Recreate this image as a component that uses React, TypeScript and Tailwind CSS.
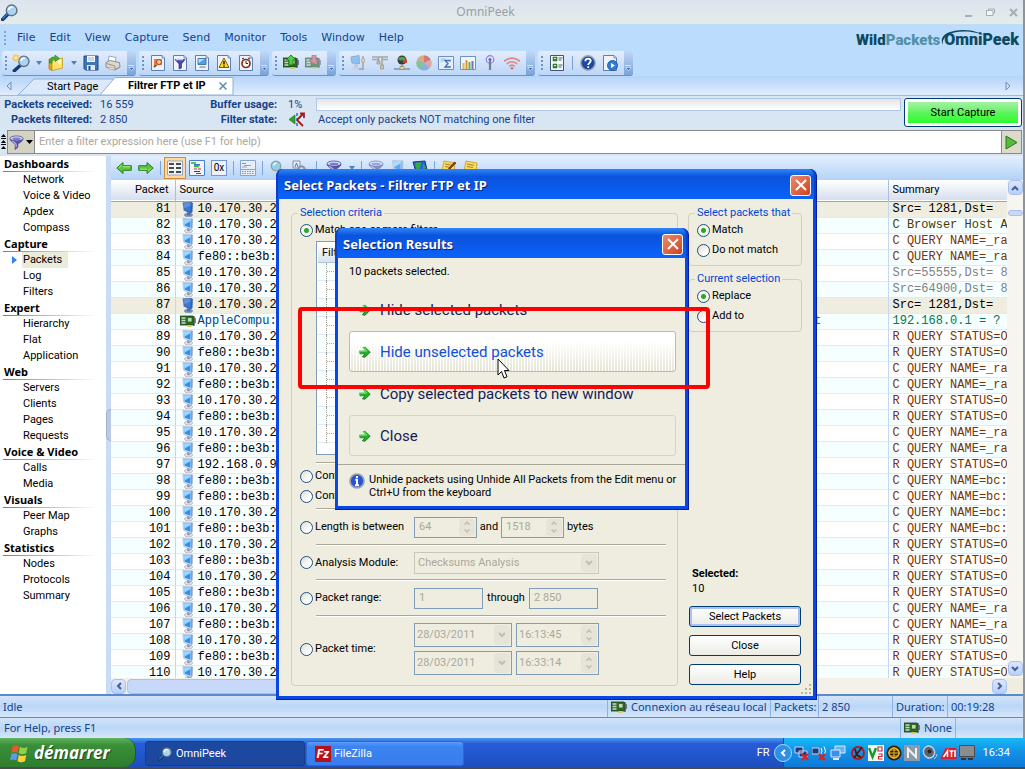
import type { ReactNode } from 'react';
import clsx from 'clsx';

const menus = ['File', 'Edit', 'View', 'Capture', 'Send', 'Monitor', 'Tools', 'Window', 'Help'];

const sections = [
  { title: 'Dashboards', items: ['Network', 'Voice & Video', 'Apdex', 'Compass'] },
  { title: 'Capture', items: ['Packets', 'Log', 'Filters'] },
  { title: 'Expert', items: ['Hierarchy', 'Flat', 'Application'] },
  { title: 'Web', items: ['Servers', 'Clients', 'Pages', 'Requests'] },
  { title: 'Voice & Video', items: ['Calls', 'Media'] },
  { title: 'Visuals', items: ['Peer Map', 'Graphs'] },
  { title: 'Statistics', items: ['Nodes', 'Protocols', 'Summary'] },
];

const IP4 = '10.170.30.23';
const IP6 = 'fe80::be3b:a';
const STATUS = 'R QUERY STATUS=OK';
const NAME = 'C QUERY NAME=_rac';
const NAME_BC = 'C QUERY NAME=bc:3';

const packets: [number, string, string][] = [
  [81, IP4, 'Src= 1281,Dst='],
  [82, IP4, 'C Browser Host An'],
  [83, IP4, NAME],
  [84, IP6, NAME],
  [85, IP4, 'Src=55555,Dst= 80'],
  [86, IP4, 'Src=64900,Dst= 80'],
  [87, IP4, 'Src= 1281,Dst='],
  [88, 'AppleCompu:0', '192.168.0.1 = ?'],
  [89, IP4, STATUS],
  [90, IP6, STATUS],
  [91, IP4, NAME],
  [92, IP6, NAME],
  [93, IP4, STATUS],
  [94, IP6, STATUS],
  [95, IP4, NAME],
  [96, IP6, NAME],
  [97, '192.168.0.9', STATUS],
  [98, IP6, NAME_BC],
  [99, IP6, NAME_BC],
  [100, IP4, NAME_BC],
  [101, IP6, NAME_BC],
  [102, IP4, STATUS],
  [103, IP6, STATUS],
  [104, IP4, STATUS],
  [105, IP6, STATUS],
  [106, IP4, NAME],
  [107, IP6, NAME],
  [108, IP4, STATUS],
  [109, IP6, STATUS],
  [110, IP4, STATUS],
];

function summaryColor(id: number) {
  if (id === 81 || id === 87) return 'text-black';
  if (id === 82) return 'text-[#4a3a00]';
  if (id === 85 || id === 86) return 'text-[#808080]';
  if (id === 88) return 'text-[#007850]';
  return 'text-[#7a3300]';
}

/* ---------- icons ---------- */

function Icon({ children, className = 'w-4 h-4' }: { children: ReactNode; className?: string }) {
  return (
    <svg viewBox="0 0 16 16" className={clsx('shrink-0', className)} aria-hidden="true">
      {children}
    </svg>
  );
}

function Magnifier({ className }: { className?: string }) {
  return (
    <Icon className={className}>
      <path d="M1.5 14.5 6 10" stroke="#123a7a" strokeWidth="3.4" strokeLinecap="round" />
      <path d="M1.8 13.6 5.4 10" stroke="#3c7ad0" strokeWidth="1.2" strokeLinecap="round" />
      <circle cx="10" cy="6" r="5" fill="#a9d4f2" stroke="#5c6f85" strokeWidth="1.3" />
      <path d="M7 5.5a3.2 3.2 0 0 1 4-2.4" stroke="#fff" strokeWidth="1.6" fill="none" />
    </Icon>
  );
}

function MagnifierNew() {
  return (
    <Icon className="w-[18px] h-[18px]">
      <path d="M2 15 7 10.5" stroke="#123a7a" strokeWidth="3" strokeLinecap="round" />
      <circle cx="10.5" cy="6.5" r="4.6" fill="#a9d4f2" stroke="#5c6f85" strokeWidth="1.2" />
      <path d="M8 6a2.8 2.8 0 0 1 3.4-2.2" stroke="#fff" strokeWidth="1.4" fill="none" />
      <path d="M3.5 0v7M0 3.5h7M1 1l5 5M6 1 1 6" stroke="#f4b92c" strokeWidth="1" />
      <circle cx="3.5" cy="3.5" r="1.4" fill="#fff3b0" />
    </Icon>
  );
}

function Folder() {
  return (
    <Icon>
      <path d="M1 4v10l3 1.500V5.500z" fill="#e0a91f" stroke="#a87810" strokeWidth=".7" />
      <path d="M4 5.500 14.500 3v10L4 15.500z" fill="#ffe469" stroke="#c79518" strokeWidth=".8" />
      <path d="m10 5 3-.8v4l-3 .8z" fill="#fff9c9" />
      <path d="M1.500 8C1 3 4 1.500 7 2.200V0l4.500 3.500L7 6.500V4.400C4.500 4 3.500 5.500 4 8z" fill="#49b034" stroke="#27761b" strokeWidth=".6" />
    </Icon>
  );
}

function Floppy() {
  return (
    <Icon>
      <path d="M1 1h14v14H2.500L1 13.500z" fill="#3d77b8" stroke="#20497e" />
      <path d="M4 1h8v6H4z" fill="#f4f8fc" />
      <path d="M5 3h6M5 5h6" stroke="#9fb4cc" />
      <path d="M4 10h8v5H4z" fill="#dfe7ef" />
      <path d="M5.500 11h2v4h-2z" fill="#20497e" />
    </Icon>
  );
}

function Printer() {
  return (
    <Icon>
      <path d="m4 1 7 1.500L10 8 3 7z" fill="#fff" stroke="#8796a8" strokeWidth=".8" />
      <path d="M1 7.500 5 5.500l9.500 2L15 12l-5 3L1 12z" fill="#dcd9d2" stroke="#7d7a74" strokeWidth=".8" />
      <path d="M1.500 8.500 10 11v3.500L15 12" fill="none" stroke="#97948d" />
      <path d="m4 12 6 1.500-1 1.500-6-1.500z" fill="#fdf6d8" stroke="#8a8779" strokeWidth=".5" />
    </Icon>
  );
}

function Page({ children, tone = '#5f7fae' }: { children: ReactNode; tone?: string }) {
  return (
    <Icon>
      <path d="M1.500.500h10.500l2.500 2.500v12.500h-13z" fill="#eef3fb" stroke={tone} />
      <path d="M12 .500V3h2.500" fill="#cddcf0" stroke={tone} strokeWidth=".8" />
      {children}
    </Icon>
  );
}

function Funnel({ className }: { className?: string }) {
  return (
    <Icon className={className}>
      <path d="M1 4c0 3 5 4.500 5.500 6v5.500L9.500 13v-3c.5-1.500 5.500-3 5.500-6z" fill="#5555ae" stroke="#34347e" strokeWidth=".6" />
      <path d="M3 6c2 1.800 4.600 3 4.600 4v3" stroke="#b8b8ec" strokeWidth="1.300" fill="none" />
      <ellipse cx="8" cy="3.600" rx="7" ry="2.600" fill="#d5d8f3" stroke="#4a4a9c" strokeWidth=".8" />
      <ellipse cx="8" cy="4" rx="4.500" ry="1.300" fill="#7b7bc6" />
    </Icon>
  );
}

function Computer({ selected = false, className }: { selected?: boolean; className?: string }) {
  return (
    <Icon className={className}>
      <ellipse cx="8.500" cy="13.800" rx="4.500" ry="2" fill={selected ? '#6f8fc8' : '#e1e3e8'} stroke="#8d94a3" strokeWidth=".5" />
      <path d="M7 10h5l-2 4H7z" fill={selected ? '#4470bb' : '#98a3b8'} />
      <path d="M2.500.500 11.500 0l1.500 1-.5 10-2 1L3.500 9z" fill={selected ? '#2f62b8' : '#dbe5f4'} stroke="#7d92b8" strokeWidth=".5" />
      <path d="M11.300.800 12.800 1.200l-.4 9.400-1.600.8z" fill={selected ? '#3a5fa6' : '#8a9cc0'} />
      <path d="m3.500 1.500 7.300-.5-.3 9.500-6-2.300z" fill={selected ? '#3a78d4' : '#2f8ff0'} />
      <path d="m3.500 1.500 7.300-.5-.1 2.500L4.200 7z" fill={selected ? '#5c92e0' : '#9bd6ff'} />
    </Icon>
  );
}

function Nic({ arrow }: { arrow?: 'up' | 'down' }) {
  return (
    <Icon className={clsx('w-4 h-4', arrow === 'down' && 'opacity-60')}>
      <path d="M0 3h13l1 1v8H0z" fill="#2c6b2a" stroke="#17401a" strokeWidth=".8" />
      <path d="M1.500 5h4M1.500 7.500h4M1.500 10h4" stroke="#cfd8c0" strokeWidth="1.400" />
      <path d="M7.500 4.500h4.500V9H7.500z" fill="#b8dca8" stroke="#234d22" strokeWidth=".7" />
      <path d="M7.500 12h4v2h-4z" fill="#e9c93c" />
      <path d="M14 3v10M15.200 5v5" stroke="#454e44" strokeWidth="1" />
      {arrow === 'up' && <path d="m8 0 5 5h-3v5H6V5H3z" fill="#4bd33c" stroke="#146b10" strokeWidth=".8" />}
      {arrow === 'down' && <path d="m9 9 5-4h-3V0H7v5H4z" fill="#d8606d" stroke="#97303b" strokeWidth=".8" />}
    </Icon>
  );
}

function Arrow({ flip = false }: { flip?: boolean }) {
  return (
    <Icon className={clsx('w-4 h-4', flip && 'rotate-180')}>
      <path d="M.8 8 7 2.500v3.200h8.300v4.600H7v3.200z" fill="#5cc53c" stroke="#2b7f1d" />
      <path d="M3 7.500 6 5M7 6.800h7" stroke="#a9e98f" />
    </Icon>
  );
}

function GoArrow() {
  return (
    <Icon className="w-3.5 h-3.5">
      <path d="M1 6h6.500L4.500 2.500 8 1.500 15 8l-7 6.500-3.500-1L7.500 10H1z" fill="#27ae2b" stroke="#fff" strokeWidth=".8" />
      <path d="M2 7h8L7 3" stroke="#8be67f" fill="none" />
      <path d="M2 10h6l-3 3.500 3 .5 6-6" stroke="#117016" fill="none" />
    </Icon>
  );
}

function Question() {
  return (
    <Icon>
      <circle cx="8" cy="8" r="7.200" fill="#1b49a6" stroke="#a4a6ac" strokeWidth="1.500" />
      <path d="M5.300 6.200c0-3.600 5.600-3.300 5.400-.3C10.600 7.800 8.200 8 8.200 10M8.200 11.300v1.800" stroke="#fff" strokeWidth="1.800" fill="none" />
    </Icon>
  );
}

function InfoIcon() {
  return (
    <Icon>
      <circle cx="8" cy="8" r="7" fill="#2854d4" stroke="#9aa0ae" strokeWidth="1.700" />
      <path d="M8 3v2M6.300 6.800H8V12M6 12.200h4" stroke="#fff" strokeWidth="2" fill="none" />
    </Icon>
  );
}

function Notes({ pencil = false }: { pencil?: boolean }) {
  return (
    <Icon>
      <path d="m3 1 11 2-1 10L1 11z" fill="#f8dc62" stroke="#c79b21" strokeWidth=".8" />
      <path d="m4 4 7 1.300M4 6.500l6 1" stroke="#a9831e" />
      {pencil && <path d="m15 3-6 6-2 1 1-2 5.500-6z" fill="#b4341f" stroke="#47160c" strokeWidth=".6" />}
    </Icon>
  );
}

function Drop() {
  return (
    <svg viewBox="0 0 6 4" className="w-1.5 h-1 ml-px shrink-0" aria-hidden="true">
      <path d="M0 0h6L3 4z" fill="#5181bd" />
    </svg>
  );
}

function Chevron({ dir, color = '#43608f', className = 'w-2.5 h-2.5' }: { dir: 'up' | 'down' | 'left' | 'right'; color?: string; className?: string }) {
  const d = { up: 'M2 7l3-3 3 3', down: 'M2 3l3 3 3-3', left: 'M7 2 4 5l3 3', right: 'M3 2l3 3-3 3' }[dir];
  return (
    <svg viewBox="0 0 10 10" className={className} aria-hidden="true">
      <path d={d} fill="none" stroke={color} strokeWidth="2" />
    </svg>
  );
}

/* ---------- toolbars ---------- */

function ToolGroup({ children }: { children: ReactNode }) {
  return (
    <div className="flex h-[25px] rounded-[3px] border-b border-[#6593cf] bg-gradient-to-b from-[#e3edfb] to-[#bcd6f7] overflow-hidden">
      <div className="flex items-center pl-[3px] pr-1.5">
        <span className="w-0.5 h-3.5 mr-1.5 bg-[repeating-linear-gradient(180deg,#6a92cf_0_2px,transparent_2px_4px)]" />
        <div className="flex items-center gap-1.5">{children}</div>
      </div>
      <span className="w-[9px] flex items-end justify-center pb-1 bg-gradient-to-b from-[#c0d8f6] to-[#7ba3d9]">
        <svg viewBox="0 0 7 6" className="w-[7px] h-1.5" aria-hidden="true">
          <path d="M0 .5h6M1 2.500h5L3.500 5.500z" fill="#2f5ea5" stroke="#fff" strokeWidth=".6" />
        </svg>
      </span>
    </div>
  );
}

function ToolButton({ label, children }: { label: string; children: ReactNode }) {
  return (
    <button type="button" aria-label={label} className="w-4 h-[18px] flex items-center justify-center">
      {children}
    </button>
  );
}

function Sep({ className }: { className?: string }) {
  return <span className={clsx('w-px h-3.5 bg-[#7ba3d9]', className)} />;
}

function MainToolbars() {
  return (
    <div className="flex gap-[3px] pl-0.5 pt-0.5 bg-[#bbdcfc]">
      <ToolGroup>
        <ToolButton label="New capture"><MagnifierNew /></ToolButton>
        <Drop />
        <ToolButton label="Open"><Folder /></ToolButton>
        <Drop />
        <ToolButton label="Save"><Floppy /></ToolButton>
        <ToolButton label="Print"><Printer /></ToolButton>
      </ToolGroup>
      <ToolGroup>
        <ToolButton label="Start page">
          <Page>
            <path d="M4 12 8 8" stroke="#7b4a2c" strokeWidth="2" />
            <path d="M4 4h8v6H4z" fill="#e67b4c" />
            <circle cx="9" cy="7" r="2.500" fill="#ffc58f" stroke="#b23a1b" />
          </Page>
        </ToolButton>
        <ToolButton label="Filters">
          <Page><path d="M3 4.500h10L9.500 9v4l-2.500 1V9z" fill="#4a49a8" stroke="#2a2a78" strokeWidth=".6" /><path d="M4 4.500h7" stroke="#c6c6f0" strokeWidth="1.400" /></Page>
        </ToolButton>
        <ToolButton label="Names">
          <Page>
            <path d="M4 3.500h8v6H4z" fill="#4e9fe6" stroke="#2b65a8" strokeWidth=".8" />
            <path d="M4.500 4h6l-6 4z" fill="#b5e0ff" />
            <path d="M6 11h5l1 2H5z" fill="#a6b3c6" />
          </Page>
        </ToolButton>
        <ToolButton label="Alarms">
          <Page>
            <path d="m8 3 5 9.500H3z" fill="#ffd71c" stroke="#6b5600" strokeWidth=".9" />
            <path d="M8 6v3.500M8 10.500v1.200" stroke="#000" strokeWidth="1.300" />
          </Page>
        </ToolButton>
        <ToolButton label="Log">
          <Page>
            <circle cx="8" cy="8.500" r="4" fill="#fffdf0" stroke="#8a2d1f" strokeWidth="1.700" />
            <path d="M8 6v2.500h2M4 4l2-1M12 4l-2-1" stroke="#3b1a14" strokeWidth="1" fill="none" />
          </Page>
        </ToolButton>
      </ToolGroup>
      <ToolGroup>
        <ToolButton label="Insert into packet list"><Nic arrow="up" /></ToolButton>
        <ToolButton label="Remove from packet list"><Nic arrow="down" /></ToolButton>
      </ToolGroup>
      <ToolGroup>
        <ToolButton label="Nodes">
          <Icon className="w-4 h-4 opacity-70">
            <path d="m1 2 8-1.500.5 8L2 8z" fill="#6db4f2" stroke="#7090ba" />
            <path d="M4 9h4v4H4z" fill="#b9c1cf" />
            <ellipse cx="6" cy="13.500" rx="4" ry="1.500" fill="#c9ced9" />
            <path d="M13 1v14M9 14h4" stroke="#8b8b8b" strokeWidth="1.500" />
            <path d="M11.500 4h3v3h-3z" fill="#f0dc8b" stroke="#998242" strokeWidth=".7" />
          </Icon>
        </ToolButton>
        <ToolButton label="Protocols">
          <Icon className="w-4 h-4 opacity-80">
            <path d="M0 2h16M0 4.500h6M11 4.500h5M6.500 2v6M10 2v12" stroke="#96968e" strokeWidth="1.500" />
            <path d="M5 6h3v3H5zM8.500 10h3v4h-3z" fill="#cdbd80" stroke="#7d7552" strokeWidth=".6" />
          </Icon>
        </ToolButton>
        <ToolButton label="Network">
          <Icon>
            <circle cx="8" cy="5" r="4.500" fill="#3a3b42" />
            <path d="M4 4c2-3 6-3 8 0-2 2-6 2-8 0" fill="#4ea645" />
            <path d="M9 5h4v3H9z" fill="#c14934" />
            <path d="M8 9.500v4M0 14h16" stroke="#8e9099" strokeWidth="1.600" />
            <path d="M6 11.500h4v3H6z" fill="#e8dc98" stroke="#8c8457" strokeWidth=".7" />
          </Icon>
        </ToolButton>
        <ToolButton label="Size statistics">
          <Icon className="w-4 h-4 opacity-75">
            <circle cx="8" cy="8" r="7.500" fill="#6fa5dc" />
            <path d="M8 8V.500A7.500 7.500 0 0 0 1 5.500z" fill="#d99a5c" />
            <path d="M8 8V.500a7.500 7.500 0 0 1 6.500 4z" fill="#d0574c" />
            <path d="m8 8 6.500-3.500a7.500 7.500 0 0 1-1 8.600z" fill="#e2958a" />
            <path d="M8 8 1 5.500A7.500 7.500 0 0 0 4 14.300z" fill="#6dba77" />
          </Icon>
        </ToolButton>
        <ToolButton label="Summary statistics">
          <Icon>
            <path d="M.500 1.500h15v13H.500z" fill="#e4eefb" stroke="#6a93cc" />
            <path d="M2.500 4h5M2.500 6h3" stroke="#9cb9df" />
            <path d="M12 6.500V5.500H7l3 3-3 3.500h5v-1" stroke="#3f6fb5" strokeWidth="1.300" fill="none" />
          </Icon>
        </ToolButton>
        <ToolButton label="History">
          <Icon>
            <path d="M.500 1.500h15v13H.500z" fill="#f2f6fd" stroke="#6a93cc" />
            <path d="M3.500 8v6" stroke="#e9b83a" strokeWidth="2" />
            <path d="M6.500 5v9" stroke="#e78e36" strokeWidth="2" />
            <path d="M9.500 7v7" stroke="#68ad47" strokeWidth="2" />
            <path d="M12.500 6v8" stroke="#6c75c2" strokeWidth="2" />
          </Icon>
        </ToolButton>
        <ToolButton label="Channel">
          <Icon>
            <circle cx="8" cy="4.500" r="3.800" fill="#dfe0fb" stroke="#8a8ad8" strokeWidth="1.200" />
            <circle cx="8" cy="4.500" r="1.500" fill="#6060c0" />
            <path d="M8 6v9" stroke="#7c7c84" strokeWidth="2.200" />
          </Icon>
        </ToolButton>
        <ToolButton label="Signal">
          <Icon>
            <path d="M0 6.500c4.500-4.500 11.500-4.500 16 0M2.700 9c3-3 7.600-3 10.600 0M5.200 11.400c1.700-1.600 4-1.600 5.600 0" fill="none" stroke="#e28686" strokeWidth="1.700" />
            <circle cx="8" cy="13.200" r="1.300" fill="#d96b6b" />
          </Icon>
        </ToolButton>
      </ToolGroup>
      <ToolGroup>
        <ToolButton label="Options">
          <Icon>
            <path d="M1.500.500h13v15h-13z" fill="#f5f8fb" stroke="#3e5573" />
            <path d="M4 2h4v4H4zM4 9h4v4H4z" fill="#3b8b35" stroke="#245f20" strokeWidth=".5" />
            <path d="M9.500 3h4M9.500 5h3M9.500 10h4M9.500 12h3" stroke="#4a5f7c" />
            <path d="M5 3.500h2M5 10.500h2" stroke="#c8f0bd" />
          </Icon>
        </ToolButton>
        <Sep className="mx-px" />
        <ToolButton label="Help"><Question /></ToolButton>
        <ToolButton label="Getting started">
          <Page>
            <circle cx="10.500" cy="10.500" r="5" fill="#2f7bd8" stroke="#1b4f9a" strokeWidth=".8" />
            <path d="m9 8 4 2.500L9 13z" fill="#fff" />
          </Page>
        </ToolButton>
      </ToolGroup>
    </div>
  );
}

function PacketToolbar() {
  return (
    <div className="flex items-center gap-1.5 h-6 pl-[5px] bg-gradient-to-b from-[#e3effd] to-[#b4d2f7] overflow-hidden">
      <ToolButton label="Back"><Arrow /></ToolButton>
      <ToolButton label="Forward"><Arrow flip /></ToolButton>
      <Sep />
      <button type="button" aria-label="Packet list" className="w-[22px] h-[22px] -mx-[3px] flex items-center justify-center bg-[#ffd9a0] border border-[#d48a3c]">
        <Icon>
          <path d="M.500 1h15v14H.500z" fill="#f1f4f8" stroke="#8fa6c5" />
          <path d="M2 4h5M9 4h5M2 8h5M9 8h5M2 12h5M9 12h5" stroke="#111" strokeWidth="1.300" />
        </Icon>
      </button>
      <ToolButton label="Decode">
        <Icon>
          <path d="M.500.500h15v15H.500z" fill="#f1f4f8" stroke="#4c80c4" />
          <path d="M2 3h5M5 6.500h5" stroke="#17c023" strokeWidth="1.500" />
          <path d="M5 4.800h6M5 11.500h6" stroke="#2330e0" strokeWidth="1.200" />
          <path d="M5 9h3M9 9h3M7 13.500h5" stroke="#c32929" strokeWidth="1.200" />
        </Icon>
      </ToolButton>
      <button type="button" aria-label="Hex" className="w-4 h-4 flex items-center justify-center bg-[#eef2f8] border border-[#6d98d4] text-[10px]">
        0x
      </button>
      <Sep />
      <ToolButton label="Decode window">
        <Icon>
          <path d="M.500.500h15v15H.500z" fill="#e8eef7" stroke="#86a6d2" />
          <path d="M2 3.500h4" stroke="#63b56b" />
          <path d="M4 5.500h7M2 7h5" stroke="#9a9ad6" />
          <path d="M1 9.500h14" stroke="#86a6d2" />
          <path d="M2 11.500h12M2 13.500h12" stroke="#8b93a3" strokeDasharray="1.500 1" />
        </Icon>
      </ToolButton>
      <Sep />
      <ToolButton label="Find">
        <Icon>
          <circle cx="7" cy="6" r="4.800" fill="#8fd0e6" stroke="#8f9aa8" strokeWidth="1.200" />
          <path d="M4.500 5.500a2.600 2.600 0 0 1 3-2.300" stroke="#fff" strokeWidth="1.400" fill="none" />
          <path d="m10.500 9.500 4 4.500" stroke="#8f9aa8" strokeWidth="2.200" />
        </Icon>
      </ToolButton>
      <ToolButton label="Replace names">
        <Icon>
          <path d="M2 1h7v7H2z" fill="#e7ecf6" stroke="#7d92b8" />
          <path d="m4 7 1.500-4L7 7" stroke="#5c75a5" fill="none" />
          <path d="M8 11a3 3 0 1 1 5 0" stroke="#8c96a8" strokeWidth="2" fill="none" />
        </Icon>
      </ToolButton>
      <Sep className="mx-[3px]" />
      <ToolButton label="Filter"><Funnel /></ToolButton>
      <Drop />
      <Sep />
      <ToolButton label="Make filter"><Funnel className="w-4 h-4 opacity-60" /></ToolButton>
      <ToolButton label="Insert name"><Computer className="w-4 h-4 opacity-70" /></ToolButton>
      <ToolButton label="Resolve names">
        <Icon>
          <path d="M1 2 13 1l2 9-11 2z" fill="#2466c8" stroke="#143c80" />
          <path d="M3 4c3-3 7-2 6 1s-3 4-4 6zM11 3l3 5-3 1z" fill="#38a845" />
        </Icon>
      </ToolButton>
      <Sep />
      <ToolButton label="Edit note"><Notes pencil /></ToolButton>
      <ToolButton label="Delete note"><Notes /></ToolButton>
    </div>
  );
}

/* ---------- main window ---------- */

function TitleBar() {
  return (
    <div className="relative flex items-center h-[25px] px-px bg-gradient-to-b from-[#dde4ee] to-[#e3ecec] border-b border-[#c4dcef]">
      <Magnifier className="w-[17px] h-[17px]" />
      <h1 className="absolute inset-x-0 text-center -translate-x-[26px]">
        <span className="text-[12px] text-[#9a9fa5] font-['Noto_Sans',sans-serif]">OmniPeek</span>
      </h1>
      <div className="ml-auto flex items-center gap-3.5 pr-1">
        <button type="button" aria-label="Minimize" className="w-[7px] h-2.5 border-b-2 border-[#a9adb1]" />
        <button type="button" aria-label="Restore">
          <svg viewBox="0 0 9 8" className="w-[9px] h-2"><path d="M2.500 2V1h6v4H7M.500 2.500h6.500v5H.500z" fill="#f4f6f8" stroke="#a9adb1" /></svg>
        </button>
        <button type="button" aria-label="Close window">
          <svg viewBox="0 0 9 9" className="w-[9px] h-[9px]"><path d="m1 1 7 7M8 1 1 8" stroke="#a9adb1" strokeWidth="2" /></svg>
        </button>
      </div>
    </div>
  );
}

function MenuBar() {
  return (
    <div className="flex items-center h-6 pl-1 pr-1 pt-0.5 bg-[#bbdcfc]">
      <span className="w-0.5 h-3.5 mr-[11px] bg-[repeating-linear-gradient(180deg,#7fa6da_0_2px,transparent_2px_4px)]" />
      <nav className="flex gap-3.5 text-[11px] text-[#15428b] font-['DejaVu_Sans',sans-serif]">
        {menus.map((m) => (
          <button type="button" key={m}>{m}</button>
        ))}
      </nav>
      <div className="relative ml-auto self-end flex items-center gap-1 font-black text-[15px] leading-5 h-[18px] font-['Roboto',sans-serif]">
        <span>
          <span className="text-[#0d4a60]">Wild</span>
          <span className="text-[#5390a8]">Packets</span>
        </span>
        <span className="relative text-[16px] text-[#0d4a60]">
          OmniPeek
          <svg viewBox="0 0 50 18" className="absolute -left-1 -top-0.5 w-[50px] h-[18px]" aria-hidden="true">
            <path d="M3 17C-2 8 8 2 24 2c9 0 17 3 21 6C40 5 32 3.500 24 3.500 10 3.500 1 9 3 17z" fill="#0d4a60" />
          </svg>
        </span>
      </div>
    </div>
  );
}

function TabStrip() {
  return (
    <div className="flex items-end h-5 pr-3 bg-gradient-to-b from-[#b5d3f8] to-[#e0edfd] border-b border-[#9bbbe3]">
      <svg viewBox="0 0 6 10" className="w-1.5 h-2.5 ml-1.5 mr-1.5 self-center" aria-hidden="true"><path d="M5 1v8L1 5z" fill="none" stroke="#6f8fc4" /></svg>
      <button type="button" className="relative w-[82px] h-[17px] pl-[25px] text-left text-black">
        <svg viewBox="0 0 100 17" preserveAspectRatio="none" className="absolute left-0 top-0 w-[100px] h-[17px]" aria-hidden="true">
          <path d="M0 17 16 1h84v16z" fill="#dce9fa" stroke="#8fb0dc" />
        </svg>
        <span className="relative whitespace-nowrap pl-1">Start Page</span>
      </button>
      <button type="button" className="relative w-[134px] h-[18px] pl-7 text-left flex items-center">
        <svg viewBox="0 0 134 18" preserveAspectRatio="none" className="absolute inset-0 w-full h-full" aria-hidden="true">
          <path d="M0 18 15 .500h118V18z" fill="#fff" stroke="#8fb0dc" />
        </svg>
        <span className="relative font-bold text-black whitespace-nowrap">Filtrer FTP et IP</span>
        <svg viewBox="0 0 8 8" className="absolute right-[7px] w-2 h-2" aria-hidden="true"><path d="m.5.5 7 7M7.500.500l-7 7" stroke="#5f86bb" strokeWidth="1.500" /></svg>
      </button>
      <svg viewBox="0 0 6 10" className="w-1.5 h-2.5 ml-auto self-center" aria-hidden="true"><path d="M1 1v8l4-4z" fill="none" stroke="#6f8fc4" /></svg>
    </div>
  );
}

function CaptureInfo() {
  return (
    <div className="flex h-[34px] pl-1 pr-px bg-[#d8e6f4] text-[#15428b]">
      <dl className="grid grid-cols-[88px_100px_85px_1fr] auto-rows-[15px] grow pt-px leading-[15px] whitespace-nowrap">
        <dt className="font-bold text-right">Packets received:</dt>
        <dd className="pl-2">16 559</dd>
        <dt className="font-bold text-right">Buffer usage:</dt>
        <dd className="pl-[11px] flex items-center">
          <span className="w-7">1%</span>
          <span className="grow h-[13px] mr-[3px] border border-[#b0c8e4] bg-gradient-to-b from-[#e4e4e4] to-white" />
        </dd>
        <dt className="font-bold text-right">Packets filtered:</dt>
        <dd className="pl-2">2 850</dd>
        <dt className="font-bold text-right">Filter state:</dt>
        <dd className="pl-[11px] flex items-center">
          <Icon className="w-[18px] h-4 mr-3">
            <path d="M6 3v9L0 7.500z" fill="#2da52a" stroke="#176814" strokeWidth=".6" />
            <path d="M8 1v3M8 6v3M8 11v3" stroke="#2b5fc4" strokeWidth="1.400" />
            <path d="m8 8 6-6M11 1.500h4V6" stroke="#a31818" strokeWidth="1.800" fill="none" />
            <path d="m8 8 6 6" stroke="#a31818" strokeWidth="1.800" />
          </Icon>
          Accept only packets NOT matching one filter
        </dd>
      </dl>
      <button type="button" className="w-[118px] h-[29px] mt-0.5 p-[3px] rounded-[3px] border border-[#003c74] bg-white text-black">
        <span className="flex items-center justify-center h-full bg-gradient-to-b from-[#a4f0a4] via-[#5cf45c] to-[#22ff22]">Start Capture</span>
      </button>
    </div>
  );
}

function FilterBar() {
  return (
    <div className="flex h-6 pr-px bg-[#d8e6f4]">
      <svg viewBox="0 0 7 16" className="w-[7px] h-4 self-center" aria-hidden="true">
        <path d="m3.500 0 2.500 3H1zM3.500 6 6 9H1zM3.500 12 6 15H1z" fill="#000" />
        <path d="M1 4.500h5M1 10.500h5" stroke="#000" />
      </svg>
      <div className="grow flex border border-[#8a8a8a] bg-white">
        <button type="button" aria-label="Filter menu" className="w-[27px] flex items-center gap-0.5 pl-px bg-[#d6d2c2] border-r border-[#8a8a8a]">
          <Funnel className="w-[15px] h-[15px]" />
          <svg viewBox="0 0 7 4" className="w-[7px] h-1" aria-hidden="true"><path d="M0 0h7L3.500 4z" fill="#000" /></svg>
        </button>
        <input
          type="text"
          aria-label="Filter expression"
          placeholder="Enter a filter expression here (use F1 for help)"
          className="grow px-1 placeholder:text-[#aca899] outline-none"
        />
        <button type="button" aria-label="Apply filter" className="w-5 flex items-center justify-center bg-[#dedacb] border-l border-[#8a8a8a]">
          <svg viewBox="0 0 13 15" className="w-[13px] h-[15px]"><path d="M1 1v13l11-6.500z" fill="#57bb3c" stroke="#1f7a1c" /></svg>
        </button>
      </div>
    </div>
  );
}

function Sidebar() {
  return (
    <nav className="w-[106px] shrink-0 bg-white text-black leading-4">
      {sections.map((s) => (
        <div key={s.title}>
          <h2 className="relative h-4 pl-1 font-bold whitespace-nowrap font-['Noto_Sans',sans-serif]">
            {s.title}
            <span className="absolute left-[3px] right-2 bottom-0 h-px bg-gradient-to-r from-[#3f8ae6] to-white" />
          </h2>
          <ul>
            {s.items.map((item) => {
              const active = item === 'Packets';
              return (
                <li key={item} className="flex items-center h-4 pl-[11px]">
                  <svg viewBox="0 0 6 8" className={clsx('w-1.5 h-2 mr-[5px]', !active && 'invisible')} aria-hidden="true"><path d="M1 0v8l5-4z" fill="#2f86e8" /></svg>
                  <a href="#" className={clsx('px-px whitespace-nowrap', active && 'bg-[#ebebdc] pr-1.5')}>{item}</a>
                </li>
              );
            })}
          </ul>
        </div>
      ))}
    </nav>
  );
}

function PacketTable() {
  return (
    <table className="w-full table-fixed border-collapse text-black">
      <colgroup>
        <col className="w-16" />
        <col />
        <col className="w-[76px]" />
        <col className="w-[119px]" />
      </colgroup>
      <thead>
        <tr className="h-[21px] bg-gradient-to-b from-white to-[#d5dfee] border-b border-[#8ea8cc]">
          <th scope="col" className="p-0 pr-1.5 font-normal text-right border-r border-[#a9c0dd]">Packet</th>
          <th scope="col" className="p-0 pl-1 font-normal text-left">Source</th>
          <th />
          <th scope="col" className="p-0 pl-1 font-normal text-left border-l border-[#a9c0dd]">Summary</th>
        </tr>
      </thead>
      <tbody className="font-['Liberation_Mono',monospace] text-[12px] leading-[15px]">
        {packets.map(([id, source, summary]) => {
          const selected = id === 81 || id === 87;
          return (
            <tr key={id} className={clsx('h-4 border-b border-[#dfe9f7]', selected ? 'bg-[#eeeddf]' : id % 2 ? 'bg-white' : 'bg-[#f5ffff]')}>
              <td className="p-0 pr-1 text-right border-r border-[#c3d9f0]">{id}</td>
              <td className="p-0 pl-1 overflow-hidden whitespace-nowrap">
                <div className={clsx('flex items-center gap-0.5 h-[15px]', id === 88 && 'text-[#003f80]')}>
                  {id === 88 ? <Nic /> : <Computer selected={selected} className="w-4 h-[15px]" />}
                  {source}
                </div>
              </td>
              <td className="p-0 pl-0.5 text-[#007850]">{id === 88 ? 't' : ''}</td>
              <td className={clsx('p-0 pl-1 border-l border-[#c3d9f0] overflow-hidden whitespace-nowrap', summaryColor(id))}>{summary}</td>
            </tr>
          );
        })}
      </tbody>
    </table>
  );
}

function ScrollButton({ dir }: { dir: 'up' | 'down' | 'left' | 'right' }) {
  return (
    <button type="button" aria-label={`Scroll ${dir}`} className="w-[15px] h-[15px] shrink-0 flex items-center justify-center rounded-sm border border-[#a9c0ee] bg-gradient-to-b from-[#dce7fe] to-[#b9cefa]">
      <Chevron dir={dir} />
    </button>
  );
}

function PacketPane() {
  return (
    <div className="grow min-w-0 flex flex-col bg-[#d8e6f4]">
      <PacketToolbar />
      <div className="grow basis-0 min-h-0 flex">
        <div className="grow min-w-0 flex flex-col">
          <div className="grow basis-0 min-h-0 overflow-hidden bg-white">
            <PacketTable />
          </div>
          <div className="flex items-center h-4 bg-[#f3f1ea]">
            <ScrollButton dir="left" />
            <span className="w-[640px] h-[15px] mx-px rounded-sm border border-[#a9c0ee] bg-[#c8d8fb]" />
            <span className="grow" />
            <ScrollButton dir="right" />
          </div>
        </div>
        <div className="w-4 flex flex-col items-center bg-[#f6f5ef]">
          <ScrollButton dir="up" />
          <span className="w-[15px] h-1.5 mt-[15px] rounded-sm border border-[#a9c0ee] bg-[#c8d8fb]" />
          <span className="grow" />
          <ScrollButton dir="down" />
          <span className="w-4 h-4 mt-0.5 bg-[#eeeddf]" />
        </div>
      </div>
    </div>
  );
}

function Cell({ className, children }: { className?: string; children: ReactNode }) {
  return <span className={clsx('flex items-center gap-1 h-full pl-[3px] border-l border-[#8db2e3] whitespace-nowrap', className)}>{children}</span>;
}

function StatusBars() {
  return (
    <div className="text-[#15428b] font-['Noto_Sans',sans-serif]">
      <div className="flex items-center h-[23px] border-t-2 border-[#5a8ac8] bg-gradient-to-b from-[#d3e4f9] via-[#bad7f7] to-[#d6e5fa]">
        <span className="grow pl-[3px]">Idle</span>
        <Cell className="w-[163px]"><Nic />Connexion au réseau local</Cell>
        <Cell className="w-12">Packets:</Cell>
        <Cell className="w-[74px]">2 850</Cell>
        <Cell className="w-[55px]">Duration:</Cell>
        <Cell className="w-[76px]">00:19:28</Cell>
      </div>
      <div className="flex items-center h-[21px] border-t border-[#5a8ac8] bg-gradient-to-b from-[#d3e4f9] via-[#bad7f7] to-[#d6e5fa]">
        <span className="grow pl-1">For Help, press F1</span>
        <Cell className="w-[55px]"><Nic />None</Cell>
        <Cell className="w-[68px]">{null}</Cell>
      </div>
    </div>
  );
}

/* ---------- taskbar ---------- */

function Tray() {
  return (
    <div className="flex items-center h-full pl-0 pr-[15px] gap-0.5 bg-gradient-to-b from-[#19b9f3] via-[#1290e8] to-[#0f79d6] border-l border-[#0a52b8] text-white">
      <button type="button" aria-label="Show hidden icons" className="w-[18px] h-[18px] -ml-2.5 flex items-center justify-center rounded-full bg-[#2e8fe8] border border-[#a8d8fa]">
        <Chevron dir="left" color="#fff" />
      </button>
      <Icon><path d="M1 2h8v6H1zM5 6h8v6H5z" fill="#223a7c" stroke="#c6d4ee" /><path d="m8 9 6 6M14 9l-6 6" stroke="#e01f1f" strokeWidth="2.200" /></Icon>
      <Icon><path d="M0 3h7v6H0z" fill="#223a7c" stroke="#c6d4ee" /><path d="M9 3q2 3 0 6M12 1.500q3 4.500 0 9" stroke="#fff" fill="none" /><path d="m7 9 6 6M13 9l-6 6" stroke="#e01f1f" strokeWidth="2.200" /></Icon>
      <Icon><path d="M5 1h10v7H5z" fill="#64b4f5" stroke="#dfeafc" /><path d="M1 5h9v7H1z" fill="#3b8fe8" stroke="#dfeafc" /><path d="M3 14h6" stroke="#dfeafc" strokeWidth="2" /></Icon>
      <Icon className="w-4 h-4 ml-0.5"><ellipse cx="8" cy="8" rx="6" ry="6" fill="none" stroke="#b01a1a" strokeWidth="1.800" /><path d="M4 13 12 2M5 4c1 5 3 8 6 8" stroke="#4b1410" strokeWidth="1.800" fill="none" /></Icon>
      <Icon><path d="M0 0h16v16H0z" fill="#f6fbf4" /><path d="m1 3 3.500 9L8 3" stroke="#139a27" strokeWidth="2.400" fill="none" /><path d="M10 2h4v4h-4zM10.500 9h3.500v2.500h-3.500V14h4" stroke="#d0273f" fill="none" strokeWidth="1.200" /></Icon>
      <Icon><circle cx="8" cy="8" r="7.500" fill="#2c2100" /><circle cx="8" cy="8" r="5" fill="none" stroke="#f1b52a" strokeWidth="1.500" /><path d="M8 2v12M2 8h12M4 5h8M4 11h8" stroke="#f1b52a" /></Icon>
      <Icon><path d="M0 0h16v16H0z" fill="#8d9aa8" /><path d="M4 13V4l8 8V3" stroke="#eef2f5" strokeWidth="2" fill="none" /></Icon>
      <Icon><ellipse cx="7" cy="7" rx="5.500" ry="6" transform="rotate(-25 7 7)" fill="#5d666f" stroke="#c8d0d6" strokeWidth="1.400" /><circle cx="7.500" cy="6.500" r="2" fill="#20262b" /><path d="M12 14q3-2 3-5" stroke="#b8cdf2" fill="none" /></Icon>
      <Icon className="w-[17px] h-4"><path d="M5 3h11v11H0z" fill="#d8202c" /><path d="m3 12 4-6v6M9 6h4M11 6v6M14.500 5v7" stroke="#fff" strokeWidth="1.500" fill="none" /></Icon>
      <Icon><path d="M.500.500h15v11H.500z" fill="#8c8c8c" stroke="#4b4b4b" /><path d="M2 14h5M9 14h5" stroke="#333" strokeWidth="2" /></Icon>
      <span className="pl-1.5">16:34</span>
    </div>
  );
}

function Taskbar() {
  return (
    <footer className="flex h-[31px] text-white bg-gradient-to-b from-[#4c96ea] via-[#265cd8] via-20% to-[#1d4fc0] border-b-2 border-[#4b4b4b]">
      <button type="button" className="flex items-center w-[136px] pl-2.5 gap-1 rounded-r-xl bg-gradient-to-b from-[#5fb35c] via-[#3a8f38] via-25% to-[#2f7d2e] border-r border-[#1d5b20]">
        <Icon className="w-5 h-5">
          <path d="M2 3q3-2 5 0L6 8Q4 6.500 1 8z" fill="#f0562a" />
          <path d="M8 3q3 2 6 0l-1 5q-3 2-6 0z" fill="#8fd044" />
          <path d="M1 9q3-1.500 5 0l-1 5q-2-1.500-5 0z" fill="#5a9bf0" />
          <path d="M7 9.500q3 1.800 6 0l-1 5q-3 1.800-6 0z" fill="#fad236" />
        </Icon>
        <span className="text-[17px] leading-5 font-bold italic font-['Noto_Sans',sans-serif] [text-shadow:1px_1px_1px_#1b4a1b]">démarrer</span>
      </button>
      <button type="button" className="flex items-center gap-1 w-40 h-[25px] ml-[9px] mt-[3px] pl-3 rounded-[3px] bg-[#1d48a0] border border-[#173c8c]">
        <Magnifier className="w-3.5 h-3.5" />
        OmniPeek
      </button>
      <button type="button" className="flex items-center gap-[3px] w-[158px] h-[25px] ml-px mt-[3px] pl-2 rounded-[3px] bg-gradient-to-b from-[#5a9cf8] via-[#3c83f2] via-20% to-[#3a7cec] border border-[#2b68d8]">
        <span className="w-4 h-4 flex items-center justify-center bg-[#b8101a] text-[12px] leading-4 font-bold italic">Fz</span>
        FileZilla
      </button>
      <span className="ml-auto self-center pr-[13px]">FR</span>
      <Tray />
    </footer>
  );
}

/* ---------- dialogs ---------- */

function DialogTitle({ children }: { children: ReactNode }) {
  return (
    <div className="flex items-center justify-between shrink-0 h-[30px] pt-0.5 pl-1.5 pr-[3px] -mx-[3px] rounded-t-[7px] border-x-2 border-[#0a3fc8] bg-gradient-to-b from-[#2f86f7] via-[#0a53dd] via-25% to-[#0a62fb]">
      <h2 className="text-[13px] font-bold text-white font-['Noto_Sans',sans-serif] [text-shadow:1px_1px_0_#0a1f6b]">{children}</h2>
      <button type="button" aria-label="Close dialog" className="w-[21px] h-[21px] flex items-center justify-center rounded-[3px] border border-white bg-gradient-to-br from-[#ee8a6c] to-[#cf3f1d]">
        <svg viewBox="0 0 12 12" className="w-3 h-3"><path d="m1 1 10 10M11 1 1 11" stroke="#fff" strokeWidth="2" /></svg>
      </button>
    </div>
  );
}

function Radio({ name, checked = false, children }: { name: string; checked?: boolean; children: ReactNode }) {
  return (
    <label className="flex items-center gap-0.5 h-5 whitespace-nowrap">
      <input
        type="radio"
        name={name}
        defaultChecked={checked}
        className="appearance-none w-[13px] h-[13px] shrink-0 rounded-full border border-[#1c5180] bg-[linear-gradient(135deg,#dcdcd6,#fff_70%)] checked:bg-[radial-gradient(circle,#2aa62a_0_2px,#f4f4f0_3px)]"
      />
      {children}
    </label>
  );
}

function Rule() {
  return <hr className="ml-4 mr-[11px] h-0.5 border-0 border-t border-[#aca899] bg-white" />;
}

function Spin() {
  return (
    <span className="w-4 shrink-0 my-px mr-px flex flex-col items-center justify-center rounded-sm bg-[#e6e4d8]">
      <Chevron dir="up" color="#c5c2b2" className="w-2 h-2" />
      <Chevron dir="down" color="#c5c2b2" className="w-2 h-2" />
    </span>
  );
}

function Field({ label, value, width, tall = false, end }: { label: string; value: string; width: string; tall?: boolean; end?: ReactNode }) {
  return (
    <span className={clsx('flex shrink-0 border border-[#7f9db9] bg-[#eeeddf]', tall ? 'h-6' : 'h-[21px]', width)}>
      <input type="text" aria-label={label} defaultValue={value} disabled className={clsx('min-w-0 grow text-[#aca899]', tall ? 'pl-0.5' : 'pl-1')} />
      {end}
    </span>
  );
}

function DropMark() {
  return (
    <span className="w-4 shrink-0 my-px mr-px flex items-center justify-center rounded-sm bg-[#e6e4d8]">
      <Chevron dir="down" color="#c0bdad" />
    </span>
  );
}

const groupBox = 'min-w-0 rounded-[4px] border border-[#d0d0bf]';
const legend = 'px-0.5 leading-[14px] text-[#0046d5]';

function SelectPacketsDialog() {
  return (
    <section className="absolute left-[276px] top-[169px] w-[541px] h-[531px] flex flex-col px-[3px] pb-[3px] rounded-t-[7px] border-r border-b border-[#001ea0] bg-[#0a47e0] text-black">
      <DialogTitle>Select Packets - Filtrer FTP et IP</DialogTitle>
      <div className="relative grow flex justify-between bg-[#eeeddf] pl-3 pr-[11px] pt-[7px] pb-2.5">
        <fieldset className={clsx(groupBox, 'w-[387px] pl-2')}>
          <legend className={clsx(legend, '-ml-0.5')}>Selection criteria</legend>
          <Radio name="criteria" checked>Match one or more filters</Radio>
          <div className="h-[214px] mt-px ml-4 mr-[11px] p-px border border-[#7f9db9] bg-white">
            <div className="h-5 pl-1 leading-5 bg-gradient-to-b from-white to-[#d9e2ef] border-b border-[#b4c4da]">Filter</div>
            {Array.from({ length: 10 }, (_, i) => (
              <div key={i} className={clsx('h-[18px] pl-2 border-b border-[#dfe9f7]', i % 2 === 0 && 'bg-[#f8ffff]')}>
                <span className="block h-[18px] w-3.5 border-l border-dotted border-[#9c9a8c] bg-[linear-gradient(90deg,#aaa_50%,transparent_50%)] bg-[length:2px_1px] bg-[position:0_8px] bg-repeat-x" />
              </div>
            ))}
          </div>
          <div className="mt-[7px]"><Rule /></div>
          <div className="py-0.5">
            <Radio name="criteria">Contains ASCII:</Radio>
            <Radio name="criteria">Contains hex:</Radio>
          </div>
          <Rule />
          <div className="flex items-center h-[34px]">
            <span className="w-[114px]"><Radio name="criteria">Length is between</Radio></span>
            <Field label="Minimum length" value="64" width="w-[63px]" end={<Spin />} />
            <span className="w-6 text-center">and</span>
            <Field label="Maximum length" value="1518" width="w-[63px]" end={<Spin />} />
            <span className="pl-[3px]">bytes</span>
          </div>
          <Rule />
          <div className="flex items-center h-[33px]">
            <span className="w-[114px]"><Radio name="criteria">Analysis Module:</Radio></span>
            <span className="flex w-[185px] h-[22px] border border-[#c9c7ba] bg-[#eeeddf]">
              <select aria-label="Analysis module" disabled className="appearance-none grow pl-[3px] text-[#aca899] opacity-100">
                <option>Checksums Analysis</option>
              </select>
              <DropMark />
            </span>
          </div>
          <Rule />
          <div className="flex items-center h-[34px]">
            <span className="w-[114px]"><Radio name="criteria">Packet range:</Radio></span>
            <Field label="First packet" value="1" width="w-[69px]" />
            <span className="w-[46px] text-center">through</span>
            <Field label="Last packet" value="2 850" width="w-[69px]" />
          </div>
          <Rule />
          <div className="flex items-center h-16">
            <span className="w-[114px]"><Radio name="criteria">Packet time:</Radio></span>
            <div className="grid grid-cols-[98px_83px] gap-1">
              <Field label="Start date" value="28/03/2011" width="w-full" tall end={<DropMark />} />
              <Field label="Start time" value="16:13:45" width="w-full" tall end={<Spin />} />
              <Field label="End date" value="28/03/2011" width="w-full" tall end={<DropMark />} />
              <Field label="End time" value="16:33:14" width="w-full" tall end={<Spin />} />
            </div>
          </div>
        </fieldset>
        <div className="w-[114px] flex flex-col">
          <fieldset className={clsx(groupBox, 'h-[60px] pl-2')}>
            <legend className={clsx(legend, '-ml-0.5 whitespace-nowrap')}>Select packets that</legend>
            <Radio name="match" checked>Match</Radio>
            <Radio name="match">Do not match</Radio>
          </fieldset>
          <fieldset className={clsx(groupBox, 'h-[60px] mt-1.5 pl-2')}>
            <legend className={clsx(legend, '-ml-0.5 whitespace-nowrap')}>Current selection</legend>
            <Radio name="selection" checked>Replace</Radio>
            <Radio name="selection">Add to</Radio>
          </fieldset>
          <div className="mt-auto pl-1 leading-[15px]">
            <p className="font-bold">Selected:</p>
            <p>10</p>
          </div>
          <div className="flex flex-col gap-2 mt-2.5 mb-px mx-px">
            <button type="button" className="h-[21px] rounded-[3px] border border-[#003c74] bg-gradient-to-b from-white to-[#ecebe5] shadow-[inset_0_0_0_2px_#a9c2f0]">Select Packets</button>
            <button type="button" className="h-[21px] rounded-[3px] border border-[#003c74] bg-gradient-to-b from-white to-[#ecebe5]">Close</button>
            <button type="button" className="h-[21px] rounded-[3px] border border-[#003c74] bg-gradient-to-b from-white to-[#ecebe5]">Help</button>
          </div>
        </div>
        <svg viewBox="0 0 12 12" className="absolute right-px bottom-px w-3 h-3" aria-hidden="true">
          <path d="M9 1h2v2H9zM5 5h2v2H5zM9 5h2v2H9zM1 9h2v2H1zM5 9h2v2H5zM9 9h2v2H9z" fill="#b8b4a2" />
        </svg>
      </div>
    </section>
  );
}

function CommandLink({ variant = 'plain', children }: { variant?: 'plain' | 'hot' | 'default'; children: ReactNode }) {
  return (
    <button
      type="button"
      className={clsx(
        'flex items-center gap-2 h-[41px] pl-2 rounded-[3px] border text-[15px] text-left',
        variant === 'plain' && 'border-transparent text-[#151c55]',
        variant === 'default' && 'border-[#a5e4ee] text-[#151c55]',
        variant === 'hot' &&
          'border-[#b9b9b9] text-[#0f4fd8] bg-[linear-gradient(180deg,#fff_25%,transparent),repeating-linear-gradient(90deg,#fff_0_1px,#e6e5d6_1px_3px)]',
      )}
    >
      <GoArrow />
      {children}
    </button>
  );
}

function SelectionResultsDialog() {
  return (
    <section className="absolute left-[335px] top-[228px] w-[354px] h-[282px] flex flex-col px-[3px] pb-[3px] rounded-t-[7px] border-r border-b border-[#001ea0] bg-[#0a47e0] text-black">
      <DialogTitle>Selection Results</DialogTitle>
      <div className="grow flex flex-col bg-[#eeeddf]">
        <p className="pl-[11px] pt-1.5 h-[31px]">10 packets selected.</p>
        <div className="flex flex-col gap-px pl-[11px] pr-[9px]">
          <CommandLink>Hide selected packets</CommandLink>
          <CommandLink variant="hot">Hide unselected packets</CommandLink>
          <CommandLink>Copy selected packets to new window</CommandLink>
          <CommandLink variant="default">Close</CommandLink>
        </div>
        <div className="grow mt-2 pt-2 pl-[11px] flex items-start gap-1 border-t border-[#aca899]">
          <InfoIcon />
          <p className="leading-[13px] whitespace-nowrap">
            Unhide packets using Unhide All Packets from the Edit menu or
            <br />
            Ctrl+U from the keyboard
          </p>
        </div>
      </div>
    </section>
  );
}

export default function App() {
  return (
    <div className="relative min-h-screen flex flex-col overflow-hidden text-[11px] leading-4 font-['Roboto',sans-serif] bg-[#d8e6f4]">
      <div className="grow flex flex-col border-r-2 border-[#8f9498]">
        <TitleBar />
        <MenuBar />
        <MainToolbars />
        <TabStrip />
        <CaptureInfo />
        <FilterBar />
        <div className="grow flex pt-0.5">
          <Sidebar />
          <div className="w-[5px] shrink-0 flex items-center bg-[#c9dcf5]">
            <span className="w-[5px] h-8 rounded-l-full border border-r-0 border-[#9fb3cf] bg-[#b9cbe3]" />
          </div>
          <PacketPane />
        </div>
        <StatusBars />
      </div>
      <Taskbar />
      <SelectPacketsDialog />
      <SelectionResultsDialog />
      {/* highlight frame */}
      <div className="absolute left-[298px] top-[307px] w-[412px] h-[82px] rounded-[4px] border-4 border-[#ff0000] pointer-events-none" />
      <svg viewBox="0 0 13 21" className="absolute left-[497px] top-[358px] w-[13px] h-[21px]" aria-hidden="true">
        <path d="M1 1v16l3.500-3.500L7 20l3-1.200L7.500 12.500H12z" fill="#fff" stroke="#000" />
      </svg>
    </div>
  );
}
